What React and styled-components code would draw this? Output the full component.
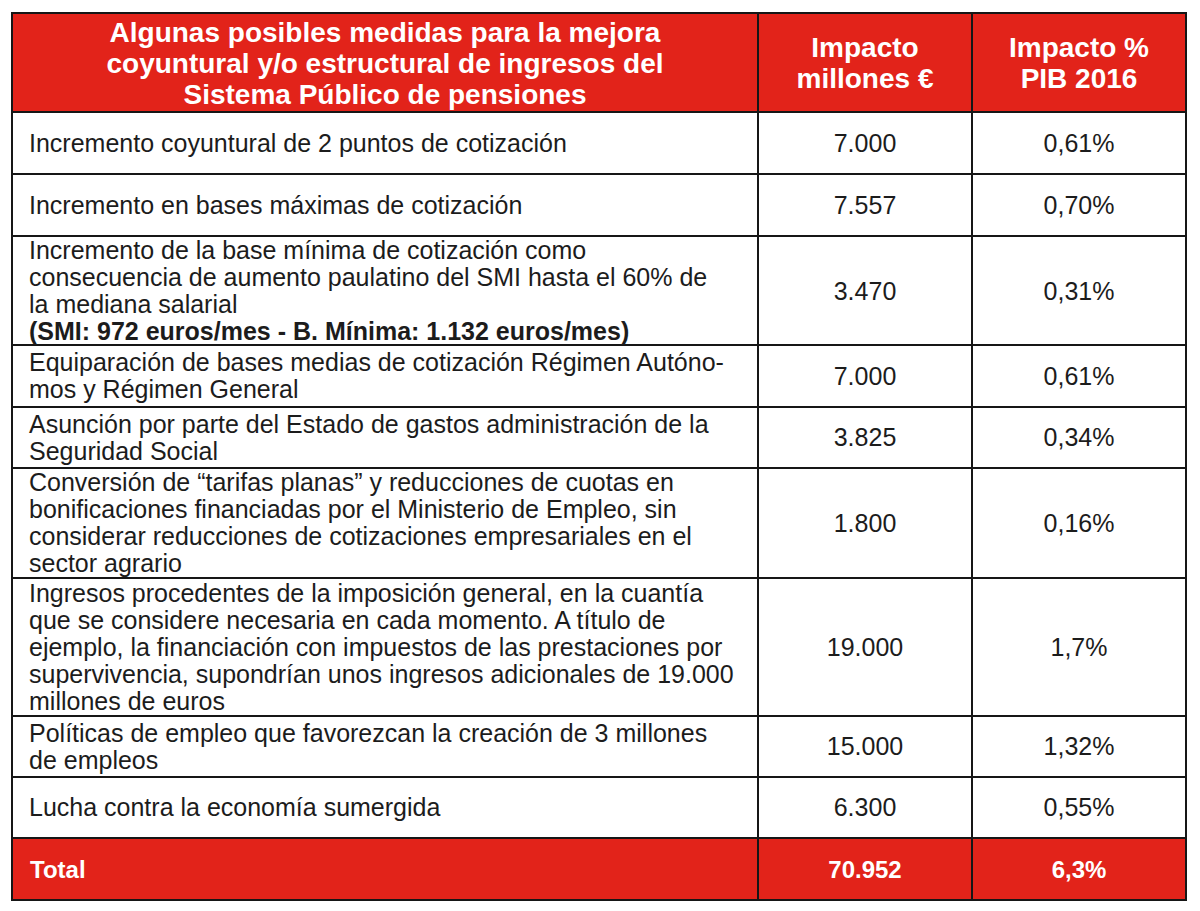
import React from "react";
import styled, { createGlobalStyle } from "styled-components";

const GlobalStyle = createGlobalStyle`
  html, body {
    margin: 0;
    padding: 0;
    background: #ffffff;
  }
  body {
    font-family: "Liberation Sans", Arial, Helvetica, sans-serif;
    color: #1c1c1c;
  }
`;

const Page = styled.div`
  padding: 12px 0 0 11px;
`;

const Table = styled.div`
  width: 1176px;
  box-sizing: border-box;
  border-left: 2px solid #161616;
  border-top: 2px solid #161616;
  display: flex;
  flex-direction: column;
`;

const Row = styled.div`
  display: grid;
  grid-template-columns: 746px 214px 214px;
  height: ${(p) => p.$h}px;
  box-sizing: border-box;
  border-bottom: 2px solid #161616;
  background: ${(p) => (p.$red ? "#e2231a" : "#ffffff")};
  color: ${(p) => (p.$red ? "#ffffff" : "#1c1c1c")};
`;

const Cell = styled.div`
  box-sizing: border-box;
  border-right: 2px solid #161616;
  display: flex;
  align-items: center;
  justify-content: ${(p) => (p.$center ? "center" : "flex-start")};
  text-align: ${(p) => (p.$center ? "center" : "left")};
  padding: ${(p) => (p.$center ? "0" : "0 0 0 16px")};
  font-size: 25px;
  line-height: 27px;
  white-space: nowrap;
  overflow: visible;
`;

const HeadCell = styled(Cell)`
  justify-content: center;
  text-align: center;
  padding: 1px 0 0 0;
  font-size: 28px;
  font-weight: 700;
  line-height: 31px;
`;

const TotalCell = styled(Cell)`
  font-size: 24px;
  font-weight: 700;
  padding: ${(p) => (p.$center ? "0" : "0 0 0 17px")};
`;

const Strong = styled.b`
  font-weight: 700;
`;

const rows = [
  {
    h: 62,
    text: ["Incremento coyuntural de 2 puntos de cotización"],
    imp: "7.000",
    pib: "0,61%",
  },
  {
    h: 62,
    text: ["Incremento en bases máximas de cotización"],
    imp: "7.557",
    pib: "0,70%",
  },
  {
    h: 109,
    text: [
      "Incremento de la base mínima de cotización como",
      "consecuencia de aumento paulatino del SMI hasta el 60% de",
      "la mediana salarial",
    ],
    bold: "(SMI: 972 euros/mes - B. Mínima: 1.132 euros/mes)",
    imp: "3.470",
    pib: "0,31%",
  },
  {
    h: 62,
    text: [
      "Equiparación de bases medias de cotización Régimen Autóno-",
      "mos y Régimen General",
    ],
    imp: "7.000",
    pib: "0,61%",
  },
  {
    h: 61,
    text: [
      "Asunción por parte del Estado de gastos administración de la",
      "Seguridad Social",
    ],
    imp: "3.825",
    pib: "0,34%",
  },
  {
    h: 110,
    text: [
      "Conversión de \u201ctarifas planas\u201d y reducciones de cuotas en",
      "bonificaciones financiadas por el Ministerio de Empleo, sin",
      "considerar reducciones de cotizaciones empresariales en el",
      "sector agrario",
    ],
    imp: "1.800",
    pib: "0,16%",
  },
  {
    h: 138,
    text: [
      "Ingresos procedentes de la imposición general, en la cuantía",
      "que se considere necesaria en cada momento. A título de",
      "ejemplo, la financiación con impuestos de las prestaciones por",
      "supervivencia, supondrían unos ingresos adicionales de 19.000",
      "millones de euros",
    ],
    imp: "19.000",
    pib: "1,7%",
  },
  {
    h: 61,
    text: [
      "Políticas de empleo que favorezcan la creación de 3 millones",
      "de empleos",
    ],
    imp: "15.000",
    pib: "1,32%",
  },
  {
    h: 61,
    text: ["Lucha contra la economía sumergida"],
    imp: "6.300",
    pib: "0,55%",
  },
];

function Lines({ lines, bold }) {
  return (
    <div>
      {lines.map((l, i) => (
        <React.Fragment key={i}>
          {i > 0 && <br />}
          {l}
        </React.Fragment>
      ))}
      {bold && (
        <>
          <br />
          <Strong>{bold}</Strong>
        </>
      )}
    </div>
  );
}

export default function App() {
  return (
    <Page>
      <GlobalStyle />
      <Table>
        <Row $h={99} $red>
          <HeadCell>
            <Lines
              lines={[
                "Algunas posibles medidas para la mejora",
                "coyuntural y/o estructural de ingresos del",
                "Sistema Público de pensiones",
              ]}
            />
          </HeadCell>
          <HeadCell>
            <Lines lines={["Impacto", "millones €"]} />
          </HeadCell>
          <HeadCell>
            <Lines lines={["Impacto %", "PIB 2016"]} />
          </HeadCell>
        </Row>
        {rows.map((r, i) => (
          <Row key={i} $h={r.h}>
            <Cell>
              <Lines lines={r.text} bold={r.bold} />
            </Cell>
            <Cell $center>{r.imp}</Cell>
            <Cell $center>{r.pib}</Cell>
          </Row>
        ))}
        <Row $h={62} $red>
          <TotalCell>Total</TotalCell>
          <TotalCell $center>70.952</TotalCell>
          <TotalCell $center>6,3%</TotalCell>
        </Row>
      </Table>
    </Page>
  );
}
